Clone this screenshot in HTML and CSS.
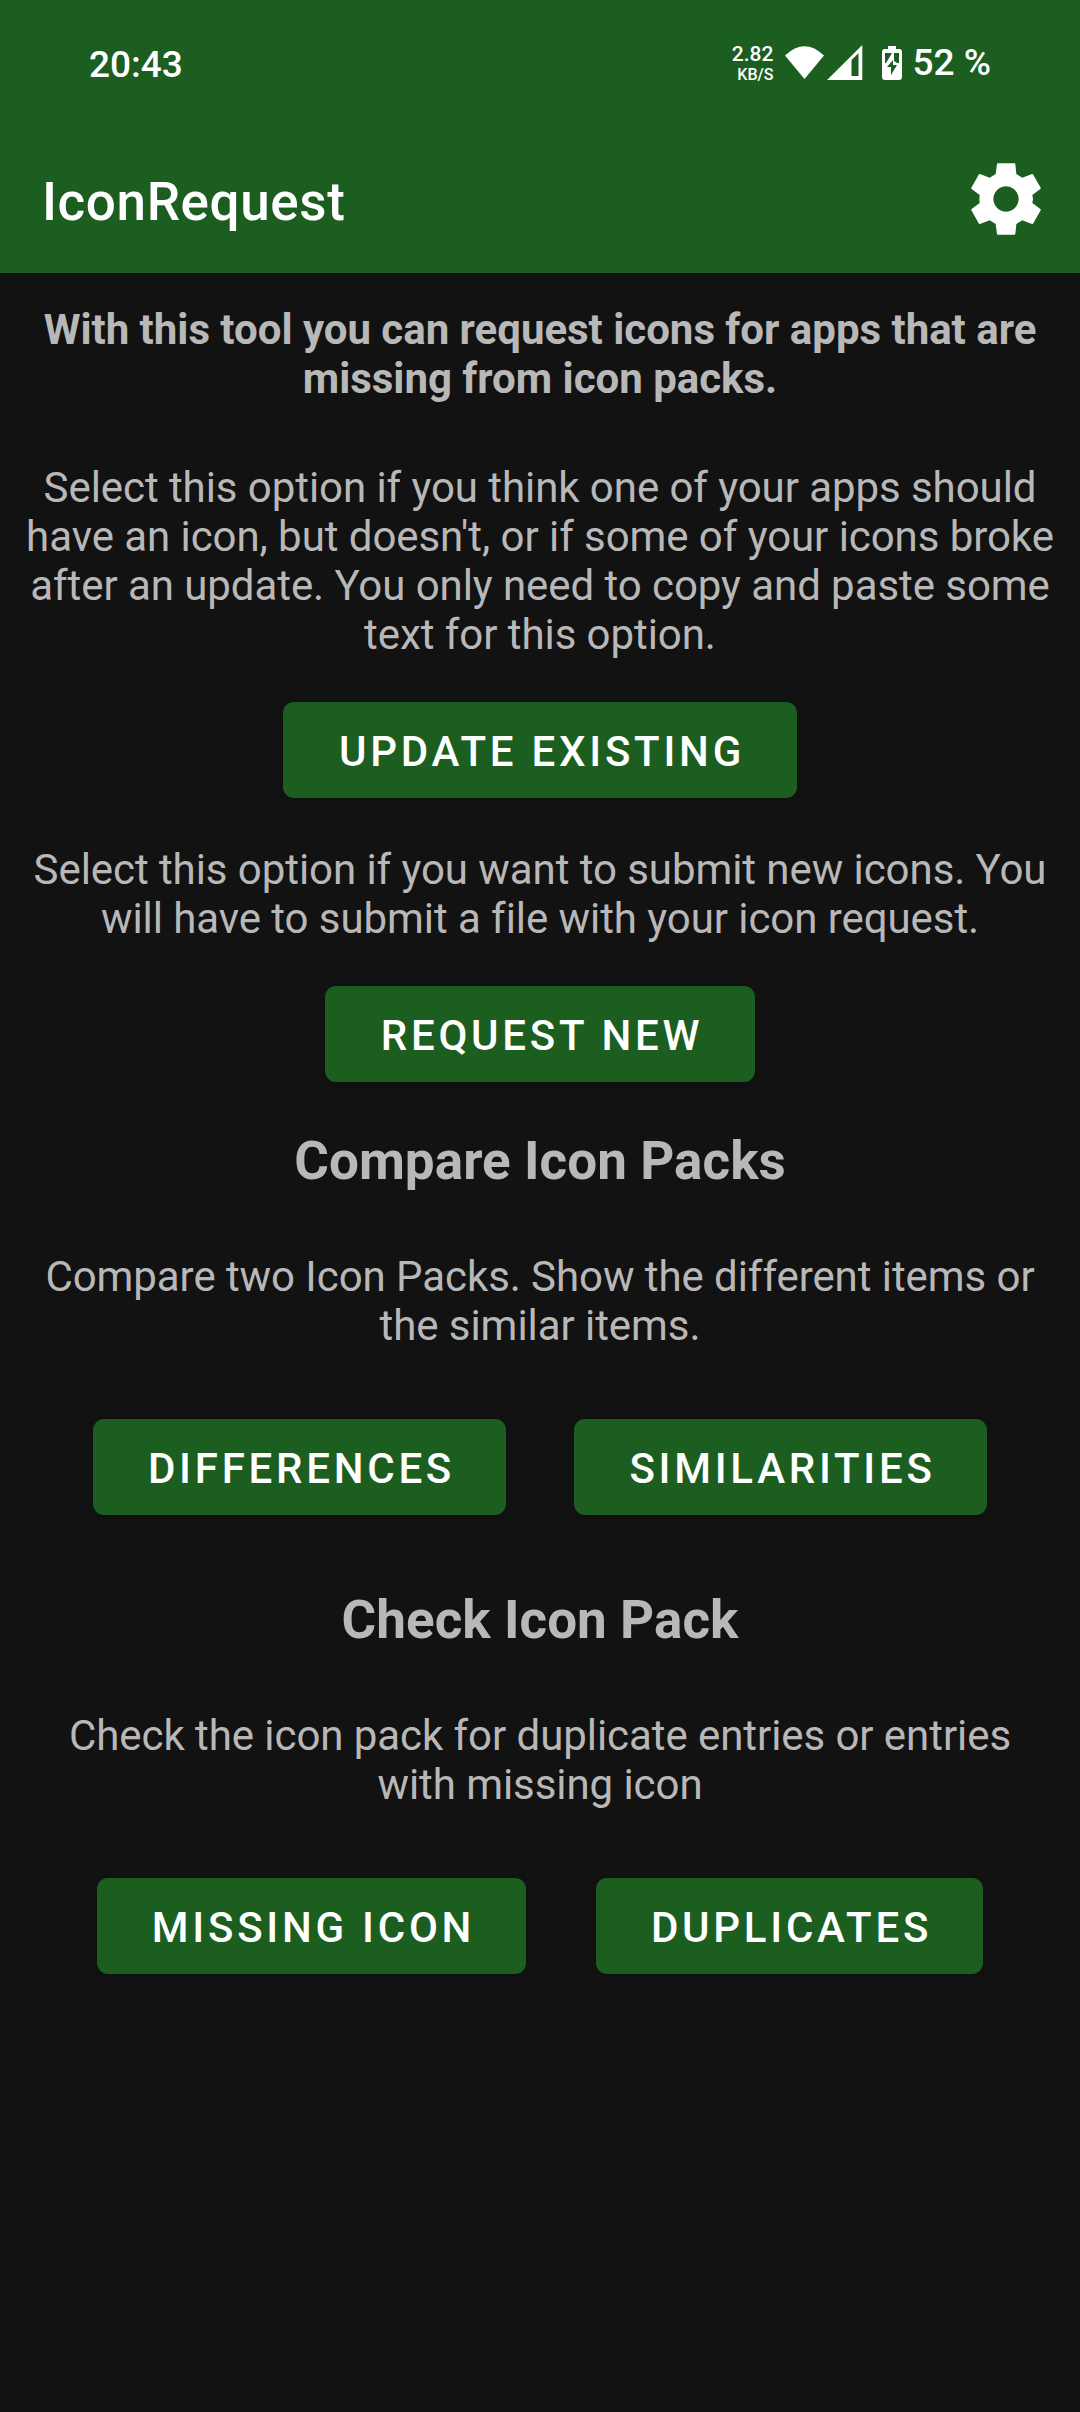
FILE: index.html
```html
<!DOCTYPE html>
<html lang="en">
<head>
<meta charset="utf-8">
<title>IconRequest</title>
<link rel="stylesheet" href="styles.css">
</head>
<body>
<header class="header">
  <div class="status">
    <span class="clock">20:43</span>
    <div class="status-right">
      <div class="speed"><span class="rate">2.82</span><span class="unit">KB/S</span></div>
      <svg class="wifi" viewBox="0 0 39 34"><path d="M0 9.5Q19.500-9 39 9.500L19.500 33Z"/></svg>
      <svg class="signal" viewBox="0 0 36 36"><path fill-rule="evenodd" d="M0 35L35.300 0V35ZM24.500 15V31H31.500V8.300Z"/></svg>
      <svg class="battery" viewBox="0 0 20 34"><path d="M6 0h8v3h3q3 0 3 3v25q0 3-3 3H3q-3 0-3-3V6q0-3 3-3h3z"/><path class="cut" d="M3 7h7L4 17H3zM12 7h5v10h-2l-3-2zM11 14v5h4L9 29v-8H5z"/></svg>
      <span class="percent">52 %</span>
    </div>
  </div>
  <div class="appbar">
    <h1 class="title">IconRequest</h1>
    <svg class="gear" viewBox="93 69 210 216"><path fill-rule="evenodd" d="M173 70H224L226 72 229 102 247 113 276 102 279 103 302 143 302 146 277 165 279 177 277 189 302 208 302 211 279 251 276 252 247 241 229 252 226 282 224 284H173L171 282 167 252 149 241 120 252 117 251 94 211 94 208 119 189 118 177 119 165 94 146 94 143 117 103 120 102 149 113 167 102 171 72ZM198 139a38 38 0 1 0 .1 0Z"/></svg>
  </div>
</header>
<main class="content">
  <p class="text intro">With this tool you can request icons for apps that are<br>missing from icon packs.</p>
  <p class="text">Select this option if you think one of your apps should<br>have an icon, but doesn't, or if some of your icons broke<br>after an update. You only need to copy and paste some<br>text for this option.</p>
  <button class="button update">Update existing</button>
  <p class="text">Select this option if you want to submit new icons. You<br>will have to submit a file with your icon request.</p>
  <button class="button request">Request new</button>
  <section class="section">
    <h2 class="heading">Compare Icon Packs</h2>
    <p class="text">Compare two Icon Packs. Show the different items or<br>the similar items.</p>
    <div class="row compare">
      <button class="button">Differences</button>
      <button class="button">Similarities</button>
    </div>
  </section>
  <section class="section">
    <h2 class="heading">Check Icon Pack</h2>
    <p class="text">Check the icon pack for duplicate entries or entries<br>with missing icon</p>
    <div class="row check">
      <button class="button">Missing icon</button>
      <button class="button">Duplicates</button>
    </div>
  </section>
</main>
</body>
</html>
```
FILE: styles.css
```css
* { box-sizing: border-box; }
body {
  margin: 0;
  min-height: 2412px;
  background: #121212;
  color: #b8b8b8;
  font-family: Roboto, sans-serif;
}
svg { display: block; fill: #fff; flex: none; }
.header { height: 273px; background: #1b5e20; color: #fff; }
.status {
  height: 126px;
  padding: 0 89px 0 89px;
  display: flex;
  justify-content: space-between;
  align-items: flex-start;
  font-weight: 500;
}
.clock { font-size: 37px; line-height: 44px; padding-top: 43px; }
.status-right { display: flex; align-items: flex-start; }
.speed { display: flex; flex-direction: column; align-items: flex-end; padding-top: 43px; margin-right: 11px; }
.rate { font-size: 21px; line-height: 22px; }
.unit { font-size: 16px; line-height: 20px; }
.wifi { width: 39px; height: 34px; margin-top: 46px; }
.signal { width: 36px; height: 36px; margin: 45px 0 0 3px; }
.battery { width: 20px; height: 34px; margin: 46px 0 0 19px; }
.battery .cut { fill: #1b5e20; }
.percent { font-size: 37px; line-height: 44px; padding-top: 41px; margin-left: 11px; }
.appbar {
  height: 145px;
  padding: 0 39px 0 42px;
  display: flex;
  align-items: center;
  justify-content: space-between;
}
.title { margin: 7px 0 0; font-size: 53px; line-height: 62px; font-weight: 500; letter-spacing: 0.6px; }
.gear { width: 70px; height: 72px; }
.content { display: flex; flex-direction: column; align-items: center; padding-top: 32px; }
.text { margin: 0; font-size: 42px; line-height: 49px; text-align: center; white-space: nowrap; letter-spacing: -0.065px; }
.intro { font-weight: 700; margin-bottom: 60px; letter-spacing: -0.02px; }
.button {
  height: 96px;
  margin: 0;
  padding: 2px 0 0 4px;
  border: 0;
  border-radius: 11px;
  background: #1b5e20;
  color: #fff;
  font: 500 42px/49px Roboto, sans-serif;
  letter-spacing: 3.75px;
  text-transform: uppercase;
  white-space: nowrap;
  box-shadow: 0 4px 8px rgba(0, 0, 0, 0.15);
}
.update { width: 514px; margin: 43px 0 47px; }
.request { width: 430px; margin: 43px 0 48px; }
.section { width: 100%; margin-bottom: 74px; }
.heading { margin: 0 0 60px; font-size: 53px; line-height: 62px; font-weight: 700; text-align: center; letter-spacing: 0.05px; }
.row { display: grid; justify-content: center; margin-top: 69px; }
.compare { grid-template-columns: 413px 413px; gap: 68px; }
.check { grid-template-columns: 429px 387px; gap: 70px; }
```
